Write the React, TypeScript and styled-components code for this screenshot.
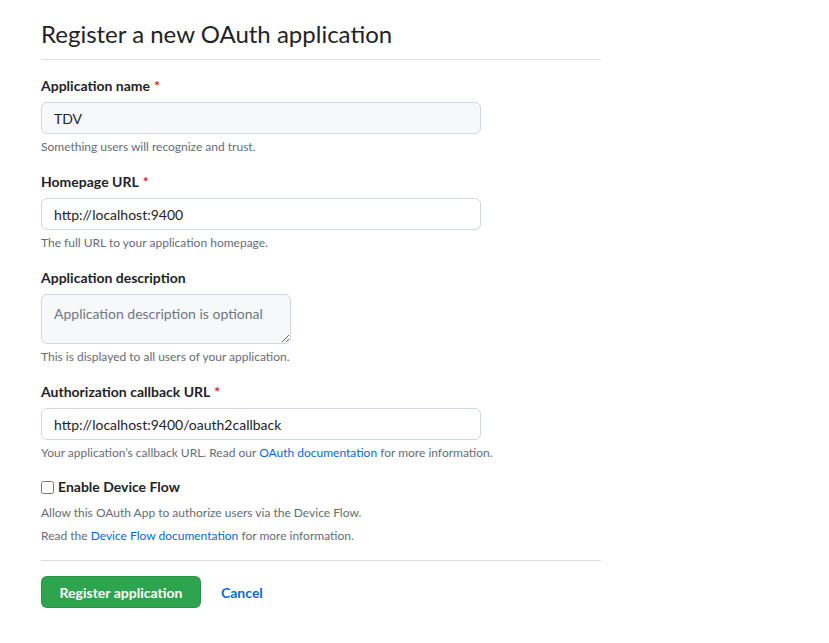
import React, { FC } from 'react';
import styled, { createGlobalStyle } from 'styled-components';

const GlobalStyle = createGlobalStyle`
  body {
    margin: 0;
    background: #fff;
    font-family: "Segoe UI", Lato, "Noto Sans", Helvetica, Arial, sans-serif;
    color: #1f2328;
  }
`;

const Page = styled.div`
  padding: 16px 0 0 41px;
  width: 560px;
`;

const Subhead = styled.div`
  padding-bottom: 7px;
  border-bottom: 1px solid #d8dee4;
`;

const Title = styled.h2`
  margin: 0;
  font-size: 24px;
  font-weight: 400;
  line-height: 36px;
  color: #1f2328;
`;

const FormGroup = styled.div`
  margin: 16px 0 15px;
`;

const Label = styled.label`
  display: block;
  font-size: 14px;
  font-weight: 700;
  line-height: 20px;
  margin-bottom: 6px;
`;

const Required = styled.span`
  color: #d1242f;
  margin-left: 4px;
`;

const Input = styled.input<{ $filled?: boolean }>`
  display: block;
  box-sizing: border-box;
  width: 440px;
  height: 32px;
  padding: 5px 12px;
  font-family: inherit;
  font-size: 14px;
  color: #1f2328;
  background: ${(p) => (p.$filled ? '#f6f8fa' : '#fff')};
  border: 1px solid #d0d7de;
  border-radius: 6px;
  outline: none;
`;

const TextArea = styled.textarea`
  display: block;
  box-sizing: border-box;
  width: 250px;
  height: 50px;
  margin-bottom: 2px;
  padding: 9px 12px;
  font-family: inherit;
  font-size: 14px;
  line-height: 20px;
  background: #f6f8fa;
  border: 1px solid #d0d7de;
  border-radius: 6px;
  outline: none;
  resize: both;
  &::placeholder {
    color: #6e7781;
  }
`;

const Note = styled.p`
  margin: 4px 0 0;
  font-size: 12px;
  line-height: 18px;
  color: #656d76;
`;

const Link = styled.a`
  color: #0969da;
  text-decoration: none;
`;

const CheckGroup = styled.div`
  margin: 15px 0 0;
`;

const CheckLabel = styled.label`
  display: flex;
  align-items: center;
  gap: 4px;
  font-size: 14px;
  font-weight: 700;
  line-height: 20px;
`;

const CheckBox = styled.input`
  margin: 0;
  width: 13px;
  height: 13px;
`;

const CheckNote = styled(Note)`
  margin: 7px 0 0;
  line-height: 17px;
  & + & {
    margin-top: 6px;
  }
`;

const Divider = styled.hr`
  margin: 16px 0 15px;
  border: 0;
  border-top: 1px solid #d8dee4;
`;

const Actions = styled.div`
  display: flex;
  align-items: center;
  gap: 20px;
`;

const PrimaryButton = styled.button`
  box-sizing: border-box;
  height: 32px;
  width: 160px;
  padding: 0 12px;
  white-space: nowrap;
  font-family: inherit;
  font-size: 14px;
  font-weight: 700;
  color: #fff;
  background: #2da44e;
  border: 1px solid rgba(27, 31, 36, 0.15);
  border-radius: 6px;
  cursor: pointer;
`;

const CancelLink = styled(Link)`
  font-size: 14px;
  font-weight: 700;
`;

type FieldProps = {
  label: string,
  required?: boolean,
  note: React.ReactNode,
  children: React.ReactNode,
};

const Field: FC<FieldProps> = ({
  label, required, note, children,
}) => (
  <FormGroup>
    <Label>
      {label}
      {required && <Required>*</Required>}
    </Label>
    {children}
    <Note>{note}</Note>
  </FormGroup>
);

const App: FC = () => (
  <Page>
    <GlobalStyle />
    <Subhead>
      <Title>Register a new OAuth application</Title>
    </Subhead>
    <Field label="Application name" required note="Something users will recognize and trust.">
      <Input $filled defaultValue="TDV" />
    </Field>
    <Field label="Homepage URL" required note="The full URL to your application homepage.">
      <Input defaultValue="http://localhost:9400" />
    </Field>
    <Field label="Application description" note="This is displayed to all users of your application.">
      <TextArea placeholder="Application description is optional" />
    </Field>
    <Field
      label="Authorization callback URL"
      required
      note={(
        <>
          Your application’s callback URL. Read our
          {' '}
          <Link href="#">OAuth documentation</Link>
          {' '}
          for more information.
        </>
      )}
    >
      <Input defaultValue="http://localhost:9400/oauth2callback" />
    </Field>
    <CheckGroup>
      <CheckLabel>
        <CheckBox type="checkbox" />
        Enable Device Flow
      </CheckLabel>
      <CheckNote>Allow this OAuth App to authorize users via the Device Flow.</CheckNote>
      <CheckNote>
        Read the
        {' '}
        <Link href="#">Device Flow documentation</Link>
        {' '}
        for more information.
      </CheckNote>
    </CheckGroup>
    <Divider />
    <Actions>
      <PrimaryButton type="button">Register application</PrimaryButton>
      <CancelLink href="#">Cancel</CancelLink>
    </Actions>
  </Page>
);

export default App;
